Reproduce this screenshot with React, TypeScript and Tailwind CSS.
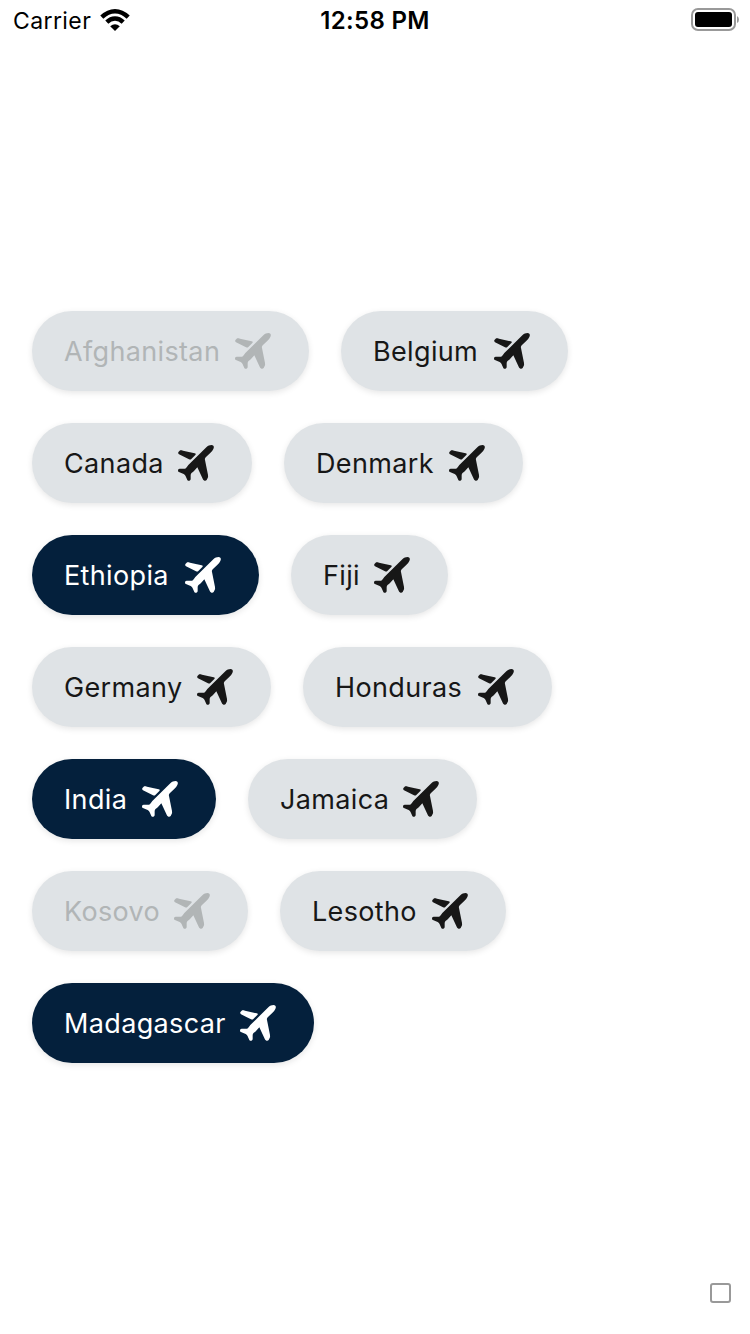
import { clsx } from 'clsx';

type State = 'default' | 'selected' | 'disabled';
type Country = { name: string; state: State; className: string };

const rows: Country[][] = [
  [
    { name: 'Afghanistan', state: 'disabled', className: 'w-[277px]' },
    { name: 'Belgium', state: 'default', className: 'w-[227px]' },
  ],
  [
    { name: 'Canada', state: 'default', className: 'w-[220px]' },
    { name: 'Denmark', state: 'default', className: 'w-[239px]' },
  ],
  [
    { name: 'Ethiopia', state: 'selected', className: 'w-[227px]' },
    { name: 'Fiji', state: 'default', className: 'w-[157px]' },
  ],
  [
    { name: 'Germany', state: 'default', className: 'w-[239px]' },
    { name: 'Honduras', state: 'default', className: 'w-[249px]' },
  ],
  [
    { name: 'India', state: 'selected', className: 'w-[184px]' },
    { name: 'Jamaica', state: 'default', className: 'w-[229px]' },
  ],
  [
    { name: 'Kosovo', state: 'disabled', className: 'w-[216px]' },
    { name: 'Lesotho', state: 'default', className: 'w-[226px]' },
  ],
  [{ name: 'Madagascar', state: 'selected', className: 'w-[282px]' }],
];

function Plane() {
  return (
    <svg className="size-9 shrink-0" viewBox="0 0 108 108" fill="currentColor" aria-hidden="true">
      <path d="M106 2C102-2 91 1 85 7L31 60C27 65 25 70 21 71L5 71C0 71-1 77 1 80L17 87C20 89 22 91 23 94L28 105C31 110 38 107 38 102L38 90C38 85 44 82 48 78L58 67L74 101C77 108 83 109 86 105L89 99C91 96 90 93 90 90L81 45C80 41 81 39 84 36L99 22C106 15 110 6 106 2Z" />
      <path d="M2 20L5 17C7 15 11 16 15 17L50 25C54 26 54 28 52 30L40 42C38 44 36 44 33 43L3 28C0 26 0 22 2 20Z" />
    </svg>
  );
}

function Chip({ name, state, className }: Country) {
  return (
    <button
      disabled={state === 'disabled'}
      className={clsx(
        'flex h-20 items-center justify-between rounded-full pr-[38px] pl-8 shadow-[0_2px_6px_rgba(0,0,0,0.10)]',
        state === 'default' && 'bg-[#dfe3e6] text-[#171717]',
        state === 'selected' && 'bg-[#04203c] text-white',
        state === 'disabled' && 'bg-[#dfe3e6] text-[#b1b5b6]',
        className,
      )}
    >
      <span className="pt-0.5 text-[27px] leading-10 tracking-[0.35px] whitespace-nowrap">{name}</span>
      <Plane />
    </button>
  );
}

function StatusBar() {
  return (
    <header className="grid h-[38px] grid-cols-3 items-center text-black">
      <div className="flex items-center gap-[9px] pl-[13px]">
        <span className="pt-0.5 text-[23px] leading-[38px] tracking-[0.4px]">Carrier</span>
        <svg className="h-[22px] w-[30px]" viewBox="0 0 30 22" aria-hidden="true">
          <g fill="none" stroke="currentColor" strokeWidth="4.4">
            <path d="M1.8 8.2Q8 2.2 15 2.2T28.2 8.2" />
            <path d="M6.8 13.1Q10.5 9.5 15 9.5T23.2 13.1" />
          </g>
          <path d="M10.2 17.2Q15 13.2 19.8 17.2L15 22Z" fill="currentColor" />
        </svg>
      </div>
      <span className="pt-0.5 text-center text-[24px] leading-[38px] font-semibold tracking-[0.3px]">12:58 PM</span>
      <svg className="mr-[11px] mb-0.5 h-6 w-12 justify-self-end" viewBox="0 0 48 24" aria-hidden="true">
        <rect x="1" y="2" width="43" height="21" rx="6" fill="none" stroke="#999" strokeWidth="2" />
        <rect x="4" y="5" width="37" height="15" rx="3" fill="black" />
        <path d="M46 9Q48 10 48 12.5T46 16Z" fill="#999" />
      </svg>
    </header>
  );
}

export default function App() {
  return (
    <div className="flex h-[1334px] w-[750px] flex-col bg-white font-['Inter',sans-serif]">
      <StatusBar />
      <main className="mt-[273px] flex flex-col gap-8 pl-8">
        {rows.map((row) => (
          <div key={row[0].name} className="flex gap-8">
            {row.map((country) => (
              <Chip key={country.name} {...country} />
            ))}
          </div>
        ))}
      </main>
      <footer className="mt-auto flex justify-end pr-[19px] pb-[31px]">
        <div className="h-5 w-[21px] rounded-[3px] border-2 border-[#999]" />
      </footer>
    </div>
  );
}
